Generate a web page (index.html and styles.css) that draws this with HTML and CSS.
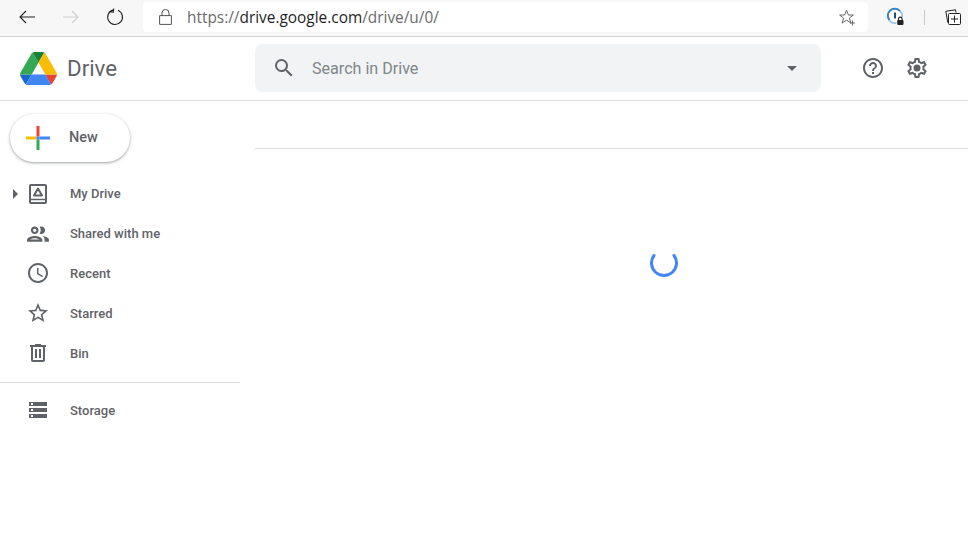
FILE: index.html
```html
<!DOCTYPE html>
<html lang="en">
<head>
<meta charset="utf-8">
<title>Drive</title>
<link rel="stylesheet" href="styles.css">
</head>
<body>
<div class="toolbar">
  <svg class="tb-back" width="16" height="14" viewBox="0 0 16 14"><path d="M7 1 1 7l6 6M1 7h15" fill="none" stroke="#222" stroke-width="1.1"/></svg>
  <svg class="tb-forward" width="16" height="14" viewBox="0 0 16 14"><path d="M9 1l6 6-6 6M15 7H0" fill="none" stroke="#cfcfcf" stroke-width="1.1"/></svg>
  <svg class="tb-reload" width="18" height="18" viewBox="0 0 18 18"><path d="M6.300 2.200A7.400 7.400 0 1 0 11 1.900M6.600 0.800v3.600H3" fill="none" stroke="#222" stroke-width="1.100" transform="rotate(8 9 9)"/></svg>
  <div class="address">
    <svg class="lock" width="13" height="16" viewBox="0 0 13 16"><path d="M3 7V4a3.500 3.500 0 0 1 7 0v3M.6 6.600h11.800v8.800H.6z" fill="none" stroke="#555" stroke-width="1"/></svg>
    <div class="url"><span class="url-dim">https://</span>drive.google.com<span class="url-dim">/drive/u/0/</span></div>
    <svg class="fav" width="17" height="17" viewBox="0 0 17 17"><path d="M7.500 1.200 9.400 6h5l-4 3.100 1.500 5-4.400-3-4.400 3 1.500-5L.6 6h5z" fill="none" stroke="#666" stroke-width="1"/><path d="M13.500 11.500v5M11 14h5" stroke="#666" stroke-width="1"/></svg>
  </div>
  <svg class="onepass" width="20" height="20" viewBox="0 0 20 20"><circle cx="9" cy="9" r="7.200" fill="#fff" stroke="#9cc3e6" stroke-width="1.800"/><path d="M3.500 13A6.800 6.800 0 0 1 13.800 4" fill="none" stroke="#2f7fc4" stroke-width="1.800"/><rect x="8" y="5.500" width="2" height="6" fill="#1d4f7c"/><rect x="10.500" y="10" width="8" height="8.500" rx="1.500" fill="#fff"/><rect x="11.200" y="13" width="6.300" height="5" rx="1" fill="#222"/><path d="M12.500 13v-1a1.800 1.800 0 0 1 3.600 0v1" fill="none" stroke="#222" stroke-width="1.200"/></svg>
  <div class="tb-sep"></div>
  <svg class="collections" width="16" height="16" viewBox="0 0 16 16"><path d="M2.800 13.500.8 2.300 10.500.8l.5 2.700" fill="none" stroke="#222" stroke-width="1"/><rect x="3.500" y="4.500" width="12" height="11" rx="1" fill="#fff" stroke="#222" stroke-width="1"/><path d="M9.500 6.500v7M6 10h7" stroke="#222" stroke-width="1"/></svg>
</div>

<header class="appbar">
  <div class="brand">
    <svg class="logo" width="37" height="33" viewBox="0 0 87.300 78"><path d="m6.600 66.850 3.850 6.650c.8 1.400 1.950 2.500 3.300 3.300l13.750-23.800h-27.500c0 1.550.4 3.100 1.200 4.500z" fill="#1967d2"/><path d="m43.650 25-13.750-23.800c-1.350.8-2.500 1.900-3.300 3.300l-25.400 44a9.060 9.060 0 0 0 -1.200 4.500h27.500z" fill="#34a853"/><path d="m73.550 76.800c1.350-.8 2.500-1.900 3.300-3.300l1.600-2.750 7.650-13.250c.8-1.400 1.200-2.950 1.200-4.500h-27.502l5.852 11.500z" fill="#ea4335"/><path d="m43.650 25 13.750-23.800c-1.350-.8-2.900-1.200-4.500-1.200h-18.500c-1.600 0-3.150.45-4.500 1.200z" fill="#188038"/><path d="m59.800 53h-32.300l-13.750 23.800c1.350.8 2.900 1.200 4.500 1.200h50.800c1.600 0 3.150-.45 4.500-1.200z" fill="#4285f4"/><path d="m73.400 26.500-12.700-22c-.8-1.400-1.950-2.500-3.300-3.300l-13.750 23.800 16.150 28h27.450c0-1.550-.4-3.100-1.200-4.500z" fill="#fbbc04"/></svg>
    <span class="brand-name">Drive</span>
  </div>
  <div class="search">
    <svg class="search-icon" width="24" height="24" viewBox="0 0 24 24"><path fill="#5f6368" d="M15.500 14h-.79l-.28-.27A6.471 6.471 0 0 0 16 9.500 6.500 6.500 0 1 0 9.500 16c1.610 0 3.090-.59 4.230-1.570l.27.28v.79l5 4.990L20.490 19l-4.990-5zm-6 0C7.010 14 5 11.990 5 9.500S7.010 5 9.500 5 14 7.010 14 9.500 11.990 14 9.500 14z"/></svg>
    <span class="search-text">Search in Drive</span>
    <span class="search-caret"></span>
  </div>
  <svg class="help" width="24" height="24" viewBox="0 0 24 24"><path fill="#5f6368" d="M11 18h2v-2h-2v2zm1-16C6.480 2 2 6.480 2 12s4.480 10 10 10 10-4.480 10-10S17.520 2 12 2zm0 18c-4.410 0-8-3.590-8-8s3.590-8 8-8 8 3.590 8 8-3.590 8-8 8zm0-14c-2.210 0-4 1.790-4 4h2c0-1.100.9-2 2-2s2 .9 2 2c0 2-3 1.750-3 5h2c0-2.250 3-2.500 3-5 0-2.210-1.790-4-4-4z"/></svg>
  <svg class="gear" width="24" height="24" viewBox="0 0 24 24"><path fill="#5f6368" d="M19.430 12.980c.04-.32.07-.64.07-.98 0-.34-.03-.66-.07-.98l2.110-1.650c.19-.15.24-.42.12-.64l-2-3.460c-.09-.16-.26-.25-.44-.25-.06 0-.12.01-.17.03l-2.490 1c-.52-.4-1.080-.73-1.690-.98l-.38-2.650C14.460 2.180 14.250 2 14 2h-4c-.25 0-.46.18-.49.42l-.38 2.650c-.61.25-1.170.59-1.690.98l-2.490-1c-.06-.02-.12-.03-.18-.03-.17 0-.34.09-.43.25l-2 3.460c-.13.22-.07.49.12.64l2.110 1.650c-.04.32-.07.65-.07.98 0 .33.03.66.07.98l-2.110 1.650c-.19.15-.24.42-.12.64l2 3.460c.09.16.26.25.44.25.06 0 .12-.01.17-.03l2.490-1c.52.4 1.080.73 1.690.98l.38 2.650c.03.24.24.42.49.42h4c.25 0 .46-.18.49-.42l.38-2.650c.61-.25 1.170-.59 1.690-.98l2.490 1c.06.02.12.03.18.03.17 0 .34-.09.43-.25l2-3.460c.12-.22.07-.49-.12-.64l-2.110-1.650zm-1.980-1.710c.04.31.05.52.05.73 0 .21-.02.43-.05.73l-.14 1.130.89.7 1.080.84-.7 1.210-1.270-.51-1.040-.42-.9.680c-.43.32-.84.56-1.250.73l-1.060.43-.16 1.130-.2 1.350h-1.400l-.19-1.350-.16-1.130-1.060-.43c-.43-.18-.83-.41-1.230-.71l-.91-.7-1.060.43-1.270.51-.7-1.210 1.080-.84.89-.7-.14-1.130c-.03-.31-.05-.54-.05-.74s.02-.43.05-.73l.14-1.130-.89-.7-1.080-.84.7-1.210 1.270.51 1.040.42.9-.68c.43-.32.84-.56 1.250-.73l1.060-.43.16-1.130.2-1.350h1.390l.19 1.350.16 1.130 1.060.43c.43.18.83.41 1.230.71l.91.7 1.060-.43 1.270-.51.7 1.210-1.070.85-.89.7.14 1.130z"/><circle cx="12" cy="12" r="3.500" fill="#5f6368"/></svg>
</header>

<div class="body">
  <aside class="sidebar">
    <div class="new-btn">
      <svg class="plus" width="24" height="24" viewBox="0 0 24 24"><path fill="#fbbc04" d="M0 10.500h10.500v3H0z"/><path fill="#ea4335" d="M10.500 0h3v10.500h-3z"/><path fill="#4285f4" d="M13.500 10.500H24v3H13.500z"/><path fill="#34a853" d="M10.500 13.500h3V24h-3z"/><path fill="#4285f4" d="M10.500 10.500h3v3h-3z"/></svg>
      <span class="new-label">New</span>
    </div>
    <nav class="nav">
      <div class="nav-row">
        <span class="expander"></span>
        <svg class="nav-icon" width="24" height="24" viewBox="0 0 24 24"><rect x="4" y="4" width="16" height="18" rx="1" fill="none" stroke="#5f6368" stroke-width="2"/><path d="M4 18.500h16" stroke="#5f6368" stroke-width="1.500"/><path d="M12 7.500 16 14.500H8z" fill="none" stroke="#5f6368" stroke-width="2" stroke-linejoin="round"/></svg>
        <span class="nav-label">My Drive</span>
      </div>
      <div class="nav-row">
        <svg class="nav-icon" width="24" height="24" viewBox="1 0 22 22"><path fill="#5f6368" d="M9 13.750c-2.340 0-7 1.170-7 3.500V19h14v-1.750c0-2.330-4.660-3.500-7-3.500zM4.340 17c.84-.58 2.870-1.250 4.660-1.250s3.820.67 4.660 1.250H4.340zM9 12c1.930 0 3.500-1.570 3.500-3.500S10.930 5 9 5 5.500 6.570 5.500 8.500 7.070 12 9 12zm0-5c.83 0 1.500.67 1.500 1.500S9.830 10 9 10s-1.500-.67-1.500-1.500S8.170 7 9 7zm7.040 6.810c1.160.84 1.960 1.960 1.960 3.440V19h4v-1.750c0-2.020-3.500-3.170-5.960-3.440zM15 12c1.930 0 3.500-1.570 3.500-3.500S16.930 5 15 5c-.54 0-1.040.13-1.500.35.63.89 1 1.980 1 3.150s-.37 2.260-1 3.150c.46.22.96.35 1.500.35z"/></svg>
        <span class="nav-label">Shared with me</span>
      </div>
      <div class="nav-row">
        <svg class="nav-icon" width="24" height="24" viewBox="0 0 24 24"><path fill="#5f6368" d="M11.990 2C6.470 2 2 6.480 2 12s4.470 10 9.990 10C17.520 22 22 17.520 22 12S17.520 2 11.990 2zM12 20c-4.420 0-8-3.580-8-8s3.580-8 8-8 8 3.580 8 8-3.580 8-8 8zm.5-13H11v6l5.250 3.150.75-1.230-4.500-2.670z"/></svg>
        <span class="nav-label">Recent</span>
      </div>
      <div class="nav-row">
        <svg class="nav-icon" width="24" height="24" viewBox="0 0 24 24"><path fill="#5f6368" d="M22 9.240l-7.190-.62L12 2 9.190 8.630 2 9.240l5.460 4.730L5.820 21 12 17.270 18.180 21l-1.630-7.030L22 9.240zM12 15.400l-3.760 2.270 1-4.280-3.320-2.880 4.380-.38L12 6.100l1.710 4.040 4.380.38-3.320 2.880 1 4.280L12 15.400z"/></svg>
        <span class="nav-label">Starred</span>
      </div>
      <div class="nav-row">
        <svg class="nav-icon" width="24" height="24" viewBox="0 0 24 24"><path fill="#5f6368" d="M15 4V3H9v1H4v2h1v13c0 1.100.9 2 2 2h10c1.100 0 2-.9 2-2V6h1V4h-5zm2 15H7V6h10v13zM9 8h2v9H9zm4 0h2v9h-2z"/></svg>
        <span class="nav-label">Bin</span>
      </div>
    </nav>
    <div class="divider"></div>
    <div class="nav-row">
      <svg class="nav-icon" width="24" height="24" viewBox="0 0 24 24"><path fill="#5f6368" d="M3 20h18v-4H3v4zm2-3h2v2H5v-2zM3 4v4h18V4H3zm4 3H5V5h2v2zm-4 7h18v-4H3v4zm2-3h2v2H5v-2z"/></svg>
      <span class="nav-label">Storage</span>
    </div>
  </aside>
  <main class="content">
    <div class="content-head"></div>
    <div class="loading">
      <svg width="28" height="28" viewBox="0 0 28 28"><path d="M4 6.500A12.500 12.500 0 1 0 24 6.500" fill="none" stroke="#4285f4" stroke-width="3" stroke-linecap="round"/></svg>
    </div>
  </main>
</div>
</body>
</html>
```

FILE: styles.css
```css
* { box-sizing: border-box; }
html, body { margin: 0; padding: 0; height: 100%; background: #fff; overflow: hidden; }
body { font-family: Roboto, sans-serif; color: #5f6368; }
svg { display: block; flex: none; }

.toolbar {
  display: flex;
  align-items: center;
  height: 37px;
  padding: 0 0 2px 19px;
  background: #f7f7f7;
  border-bottom: 1px solid #d2d2d2;
}
.tb-forward { margin-left: 28px; }
.tb-reload { margin-left: 27px; }
.address {
  display: flex;
  align-items: center;
  width: 725px;
  height: 30px;
  margin-left: 19px;
  padding: 0 12px 0 16px;
  background: #fff;
  border-radius: 4px;
}
.url {
  margin-left: 15px;
  font-family: "Open Sans", sans-serif;
  font-size: 15.4px;
  color: #1f1f1f;
  white-space: nowrap;
}
.url-dim { color: #6b6b6b; }
.fav { margin-left: auto; }
.onepass { margin-left: 18px; }
.tb-sep { width: 1px; height: 15px; margin-left: 18px; background: #c8c8c8; }
.collections { margin-left: 20px; }

.appbar {
  display: flex;
  align-items: center;
  height: 64px;
  padding-bottom: 1px;
  border-bottom: 1px solid #dadce0;
}
.brand { display: flex; align-items: center; width: 255px; padding-left: 20px; }
.brand-name { margin-left: 10px; font-size: 22.3px; color: #5f6368; }
.search {
  display: flex;
  align-items: center;
  width: 566px;
  height: 48px;
  padding: 0 17px;
  background: #f1f3f4;
  border-radius: 8px;
}
.search-text { margin-left: 16px; font-size: 16.1px; color: #80868b; }
.search-caret {
  margin-left: auto;
  margin-right: 7px;
  border-top: 5px solid #5f6368;
  border-left: 5px solid transparent;
  border-right: 5px solid transparent;
}
.help { margin-left: 40px; }
.gear { margin-left: 20px; }

.body { display: flex; }
.sidebar { width: 240px; flex: none; padding-top: 13px; }
.new-btn {
  display: flex;
  align-items: center;
  width: 120px;
  height: 48px;
  margin-left: 10px;
  padding-left: 16px;
  background: #fff;
  border-radius: 24px;
  box-shadow: 0 1px 2px rgba(60,64,67,.3), 0 1px 3px 1px rgba(60,64,67,.15);
}
.new-label { margin: 0 0 2px 19px; font-size: 14.5px; font-weight: 500; color: #5f6368; }
.nav { margin-top: 11px; }
.nav-row {
  position: relative;
  display: flex;
  align-items: center;
  height: 40px;
  padding-left: 26px;
}
.expander {
  position: absolute;
  left: 13px;
  top: 16px;
  border-left: 5px solid #5f6368;
  border-top: 5px solid transparent;
  border-bottom: 5px solid transparent;
}
.nav-label { margin-left: 20px; font-size: 13px; font-weight: 500; color: #5f6368; }
.divider { height: 1px; margin: 9px 0 7px; background: #dadce0; }

.content { flex: 1; margin-left: 15px; }
.content-head { height: 48px; border-bottom: 1px solid #dadce0; }
.loading { padding: 100px 0 0 395px; }
```
